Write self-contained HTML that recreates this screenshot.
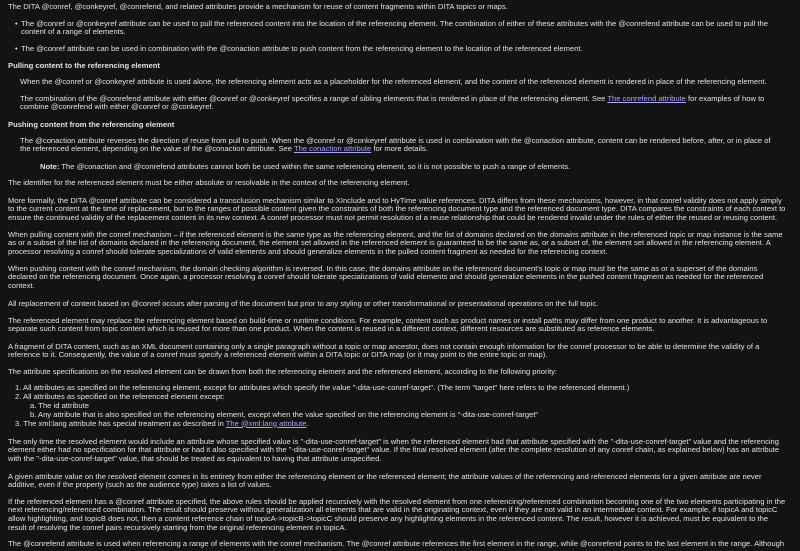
<!DOCTYPE html>
<html><head><meta charset="utf-8"><style>
html,body{margin:0;height:551px;overflow:hidden;}
body{background:#131313;width:800px;position:relative;font-family:"Liberation Sans",Arial,sans-serif;font-size:7.6px;color:#e2e2e2;}
div{position:absolute;white-space:nowrap;line-height:8.8px;}
a{color:#a6a6ff;text-decoration:underline;}
b{font-weight:bold;}
</style></head><body>
<div style="top:2.5px;left:8px">The DITA @conref, @conkeyref, @conrefend, and related attributes provide a mechanism for reuse of content fragments within DITA topics or maps.</div>
<div style="top:19.5px;left:15px">•</div>
<div style="top:19.5px;left:21px">The @conref or @conkeyref attribute can be used to pull the referenced content into the location of the referencing element. The combination of either of these attributes with the @conrefend attribute can be used to pull the<br>content of a range of elements.</div>
<div style="top:44.5px;left:15px">•</div>
<div style="top:44.5px;left:21px">The @conref attribute can be used in combination with the @conaction attribute to push content from the referencing element to the location of the referenced element.</div>
<div style="top:61.5px;left:8px"><b>Pulling content to the referencing element</b></div>
<div style="top:77.5px;left:20px">When the @conref or @conkeyref attribute is used alone, the referencing element acts as a placeholder for the referenced element, and the content of the referenced element is rendered in place of the referencing element.</div>
<div style="top:94.5px;left:20px">The combination of the @conrefend attribute with either @conref or @conkeyref specifies a range of sibling elements that is rendered in place of the referencing element. See <a>The conrefend attribute</a> for examples of how to<br>combine @conrefend with either @conref or @conkeyref.</div>
<div style="top:120.5px;left:8px"><b>Pushing content from the referencing element</b></div>
<div style="top:136.5px;left:20px">The @conaction attribute reverses the direction of reuse from pull to push. When the @conref or @conkeyref attribute is used in combination with the @conaction attribute, content can be rendered before, after, or in place of<br>the referenced element, depending on the value of the @conaction attribute. See <a>The conaction attribute</a> for more details.</div>
<div style="top:162.5px;left:40px"><b>Note:</b> The @conaction and @conrefend attributes cannot both be used within the same referencing element, so it is not possible to push a range of elements.</div>
<div style="top:178.5px;left:8px">The identifier for the referenced element must be either absolute or resolvable in the context of the referencing element.</div>
<div style="top:196.5px;left:8px">More formally, the DITA @conref attribute can be considered a transclusion mechanism similar to XInclude and to HyTime value references. DITA differs from these mechanisms, however, in that conref validity does not apply simply<br>to the current content at the time of replacement, but to the ranges of possible content given the constraints of both the referencing document type and the referenced document type. DITA compares the constraints of each context to<br>ensure the continued validity of the replacement content in its new context. A conref processor must not permit resolution of a reuse relationship that could be rendered invalid under the rules of either the reused or reusing content.</div>
<div style="top:230.5px;left:8px">When pulling content with the conref mechanism – if the referenced element is the same type as the referencing element, and the list of domains declared on the <i>domains</i> attribute in the referenced topic or map instance is the same<br>as or a subset of the list of domains declared in the referencing document, the element set allowed in the referenced element is guaranteed to be the same as, or a subset of, the element set allowed in the referencing element. A<br>processor resolving a conref should tolerate specializations of valid elements and should generalize elements in the pulled content fragment as needed for the referencing context.</div>
<div style="top:264.5px;left:8px">When pushing content with the conref mechanism, the domain checking algorithm is reversed. In this case, the domains attribute on the referenced document's topic or map must be the same as or a superset of the domains<br>declared on the referencing document. Once again, a processor resolving a conref should tolerate specializations of valid elements and should generalize elements in the pushed content fragment as needed for the referenced<br>context.</div>
<div style="top:299.5px;left:8px">All replacement of content based on @conref occurs after parsing of the document but prior to any styling or other transformational or presentational operations on the full topic.</div>
<div style="top:316.5px;left:8px">The referenced element may replace the referencing element based on build-time or runtime conditions. For example, content such as product names or install paths may differ from one product to another. It is advantageous to<br>separate such content from topic content which is reused for more than one product. When the content is reused in a different context, different resources are substituted as reference elements.</div>
<div style="top:342.5px;left:8px">A fragment of DITA content, such as an XML document containing only a single paragraph without a topic or map ancestor, does not contain enough information for the conref processor to be able to determine the validity of a<br>reference to it. Consequently, the value of a conref must specify a referenced element within a DITA topic or DITA map (or it may point to the entire topic or map).</div>
<div style="top:367.5px;left:8px">The attribute specifications on the resolved element can be drawn from both the referencing element and the referenced element, according to the following priority:</div>
<div style="top:383.5px;left:15px">1. All attributes as specified on the referencing element, except for attributes which specify the value "-dita-use-conref-target". (The term "target" here refers to the referenced element.)</div>
<div style="top:392.5px;left:15px">2. All attributes as specified on the referenced element except:</div>
<div style="top:401.5px;left:30px">a. The id attribute</div>
<div style="top:410.5px;left:30px">b. Any attribute that is also specified on the referencing element, except when the value specified on the referencing element is "-dita-use-conref-target"</div>
<div style="top:419.5px;left:15px">3. The xml:lang attribute has special treatment as described in <a>The @xml:lang attribute</a>.</div>
<div style="top:437.5px;left:8px">The only time the resolved element would include an attribute whose specified value is "-dita-use-conref-target" is when the referenced element had that attribute specified with the "-dita-use-conref-target" value and the referencing<br>element either had no specification for that attribute or had it also specified with the "-dita-use-conref-target" value. If the final resolved element (after the complete resolution of any conref chain, as explained below) has an attribute<br>with the "-dita-use-conref-target" value, that should be treated as equivalent to having that attribute unspecified.</div>
<div style="top:472.5px;left:8px">A given attribute value on the resolved element comes in its entirety from either the referencing element or the referenced element; the attribute values of the referencing and referenced elements for a given attribute are never<br>additive, even if the property (such as the audience type) takes a list of values.</div>
<div style="top:497.5px;left:8px">If the referenced element has a @conref attribute specified, the above rules should be applied recursively with the resolved element from one referencing/referenced combination becoming one of the two elements participating in the<br>next referencing/referenced combination. The result should preserve without generalization all elements that are valid in the originating context, even if they are not valid in an intermediate context. For example, if topicA and topicC<br>allow highlighting, and topicB does not, then a content reference chain of topicA-&gt;topicB-&gt;topicC should preserve any highlighting elements in the referenced content. The result, however it is achieved, must be equivalent to the<br>result of resolving the conref pairs recursively starting from the original referencing element in topicA.</div>
<div style="top:539.5px;left:8px">The @conrefend attribute is used when referencing a range of elements with the conref mechanism. The @conref attribute references the first element in the range, while @conrefend points to the last element in the range. Although</div>
</body></html>
